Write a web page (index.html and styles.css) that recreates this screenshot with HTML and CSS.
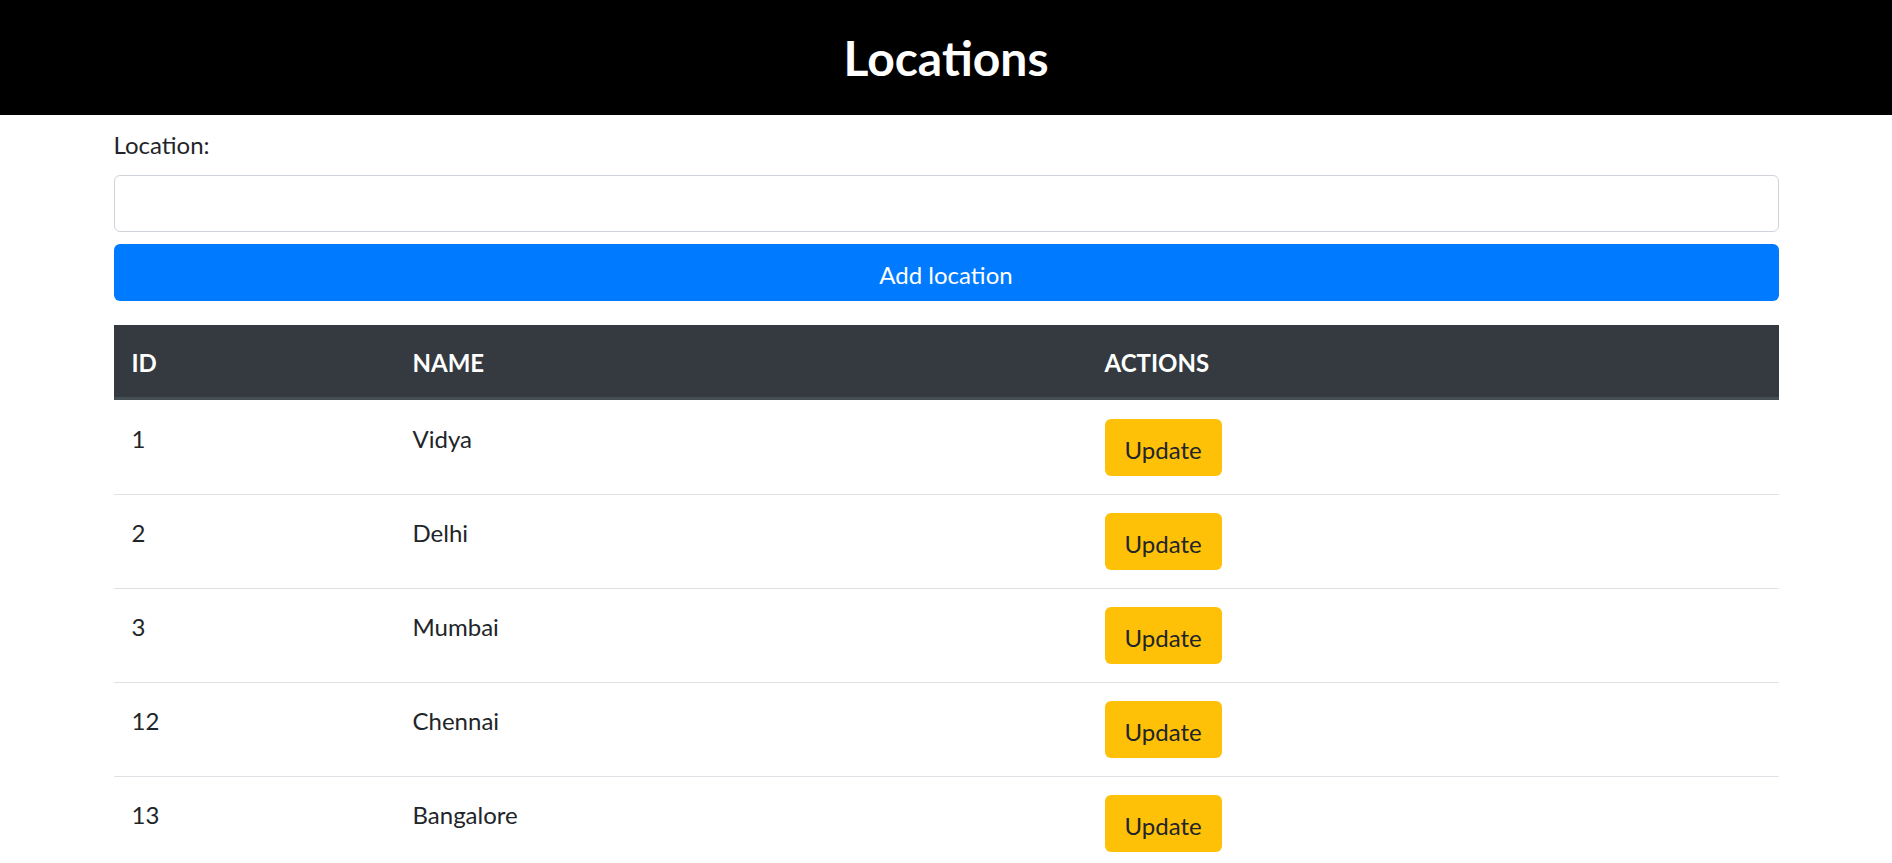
FILE: index.html
```html
<!DOCTYPE html>
<html lang="en">
<head>
<meta charset="utf-8">
<title>Locations</title>
<link rel="stylesheet" href="styles.css">
</head>
<body>
<header class="page-header">
  <h2 class="page-title">Locations</h2>
</header>
<main class="container">
  <form class="location-form">
    <label class="field-label" for="loc">Location:</label>
    <input class="field-input" id="loc" type="text">
    <button class="btn-add" type="button">Add location</button>
  </form>
  <table class="loc-table">
    <thead>
      <tr>
        <th class="col-id">ID</th>
        <th class="col-name">NAME</th>
        <th class="col-actions">ACTIONS</th>
      </tr>
    </thead>
    <tbody>
      <tr><td>1</td><td>Vidya</td><td class="cell-actions"><button class="btn-update" type="button">Update</button></td></tr>
      <tr><td>2</td><td>Delhi</td><td class="cell-actions"><button class="btn-update" type="button">Update</button></td></tr>
      <tr><td>3</td><td>Mumbai</td><td class="cell-actions"><button class="btn-update" type="button">Update</button></td></tr>
      <tr><td>12</td><td>Chennai</td><td class="cell-actions"><button class="btn-update" type="button">Update</button></td></tr>
      <tr><td>13</td><td>Bangalore</td><td class="cell-actions"><button class="btn-update" type="button">Update</button></td></tr>
    </tbody>
  </table>
</main>
</body>
</html>
```
FILE: styles.css
```css
html {
  overflow: hidden;
}
body {
  margin: 0;
  font-family: "Lato", "Open Sans", sans-serif;
  font-size: 24px;
  line-height: 36px;
  color: #212529;
  background: #fff;
}
.page-header {
  background: #000;
  height: 115px;
  display: flex;
  align-items: center;
  justify-content: center;
}
.page-title {
  margin: 0;
  color: #fff;
  font-size: 48px;
  line-height: 57.6px;
  font-weight: 700;
}
.container {
  width: 1665px;
  margin: 0 auto;
  padding-top: 12px;
}
.location-form {
  display: flex;
  flex-direction: column;
  gap: 12px;
}
.field-label {
  display: block;
}
.field-input {
  display: block;
  box-sizing: border-box;
  width: 100%;
  height: 57px;
  padding: 9px 18px;
  border: 1.5px solid #ced4da;
  border-radius: 6px;
  font: inherit;
  color: #495057;
  background: #fff;
}
.btn-add {
  box-sizing: border-box;
  width: 100%;
  height: 57px;
  padding: 11px 18px 7px;
  border: 0;
  border-radius: 6px;
  background: #007bff;
  color: #fff;
  font: inherit;
}
.loc-table {
  width: 100%;
  margin-top: 24px;
  border-collapse: collapse;
}
.loc-table th {
  background: #343a40;
  color: #fff;
  text-align: left;
  font-weight: 700;
  padding: 20px 18px 16px;
  border-bottom: 3px solid #454d55;
  vertical-align: bottom;
}
.col-id { width: 245px; }
.col-name { width: 656px; }
.col-actions { width: 656px; }
.loc-table td {
  padding: 20px 18px 16px;
  border-top: 1px solid #dee2e6;
  vertical-align: top;
}
.loc-table td.cell-actions {
  padding: 18px;
}
.loc-table tbody tr:first-child td {
  padding-top: 21px;
}
.loc-table tbody tr:first-child td.cell-actions {
  padding-top: 19px;
}
.btn-update {
  box-sizing: border-box;
  height: 57px;
  padding: 11px 20px 7px;
  border: 0;
  border-radius: 6px;
  background: #ffc107;
  color: #212529;
  font: inherit;
  line-height: 36px;
}
```
